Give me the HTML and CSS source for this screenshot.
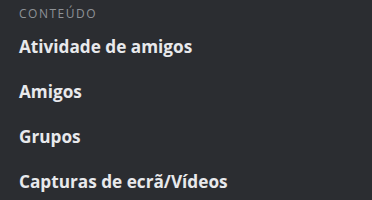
FILE: index.html
```html
<!DOCTYPE html>
<html lang="pt">
<head>
<meta charset="utf-8">
<link rel="stylesheet" href="styles.css">
</head>
<body>
<nav class="menu">
  <div class="menu-header">Conteúdo</div>
  <div class="menu-item">Atividade de amigos</div>
  <div class="menu-item">Amigos</div>
  <div class="menu-item">Grupos</div>
  <div class="menu-item">Capturas de ecrã/Vídeos</div>
</nav>
</body>
</html>
```
FILE: styles.css
```css
html, body {
  margin: 0;
  padding: 0;
  background: #2b2d31;
  width: 372px;
  height: 200px;
  overflow: hidden;
}
.menu {
  display: flex;
  flex-direction: column;
  padding: 0 19px;
  font-family: "Open Sans", "Noto Sans", sans-serif;
}
.menu-header {
  height: 24px;
  line-height: 28px;
  font-size: 12px;
  letter-spacing: 1.5px;
  text-transform: uppercase;
  color: #8e9297;
  font-weight: 400;
}
.menu-item {
  height: 45px;
  line-height: 45px;
  font-size: 17.2px;
  font-weight: 700;
  color: #e8e9ec;
  white-space: nowrap;
}
```
